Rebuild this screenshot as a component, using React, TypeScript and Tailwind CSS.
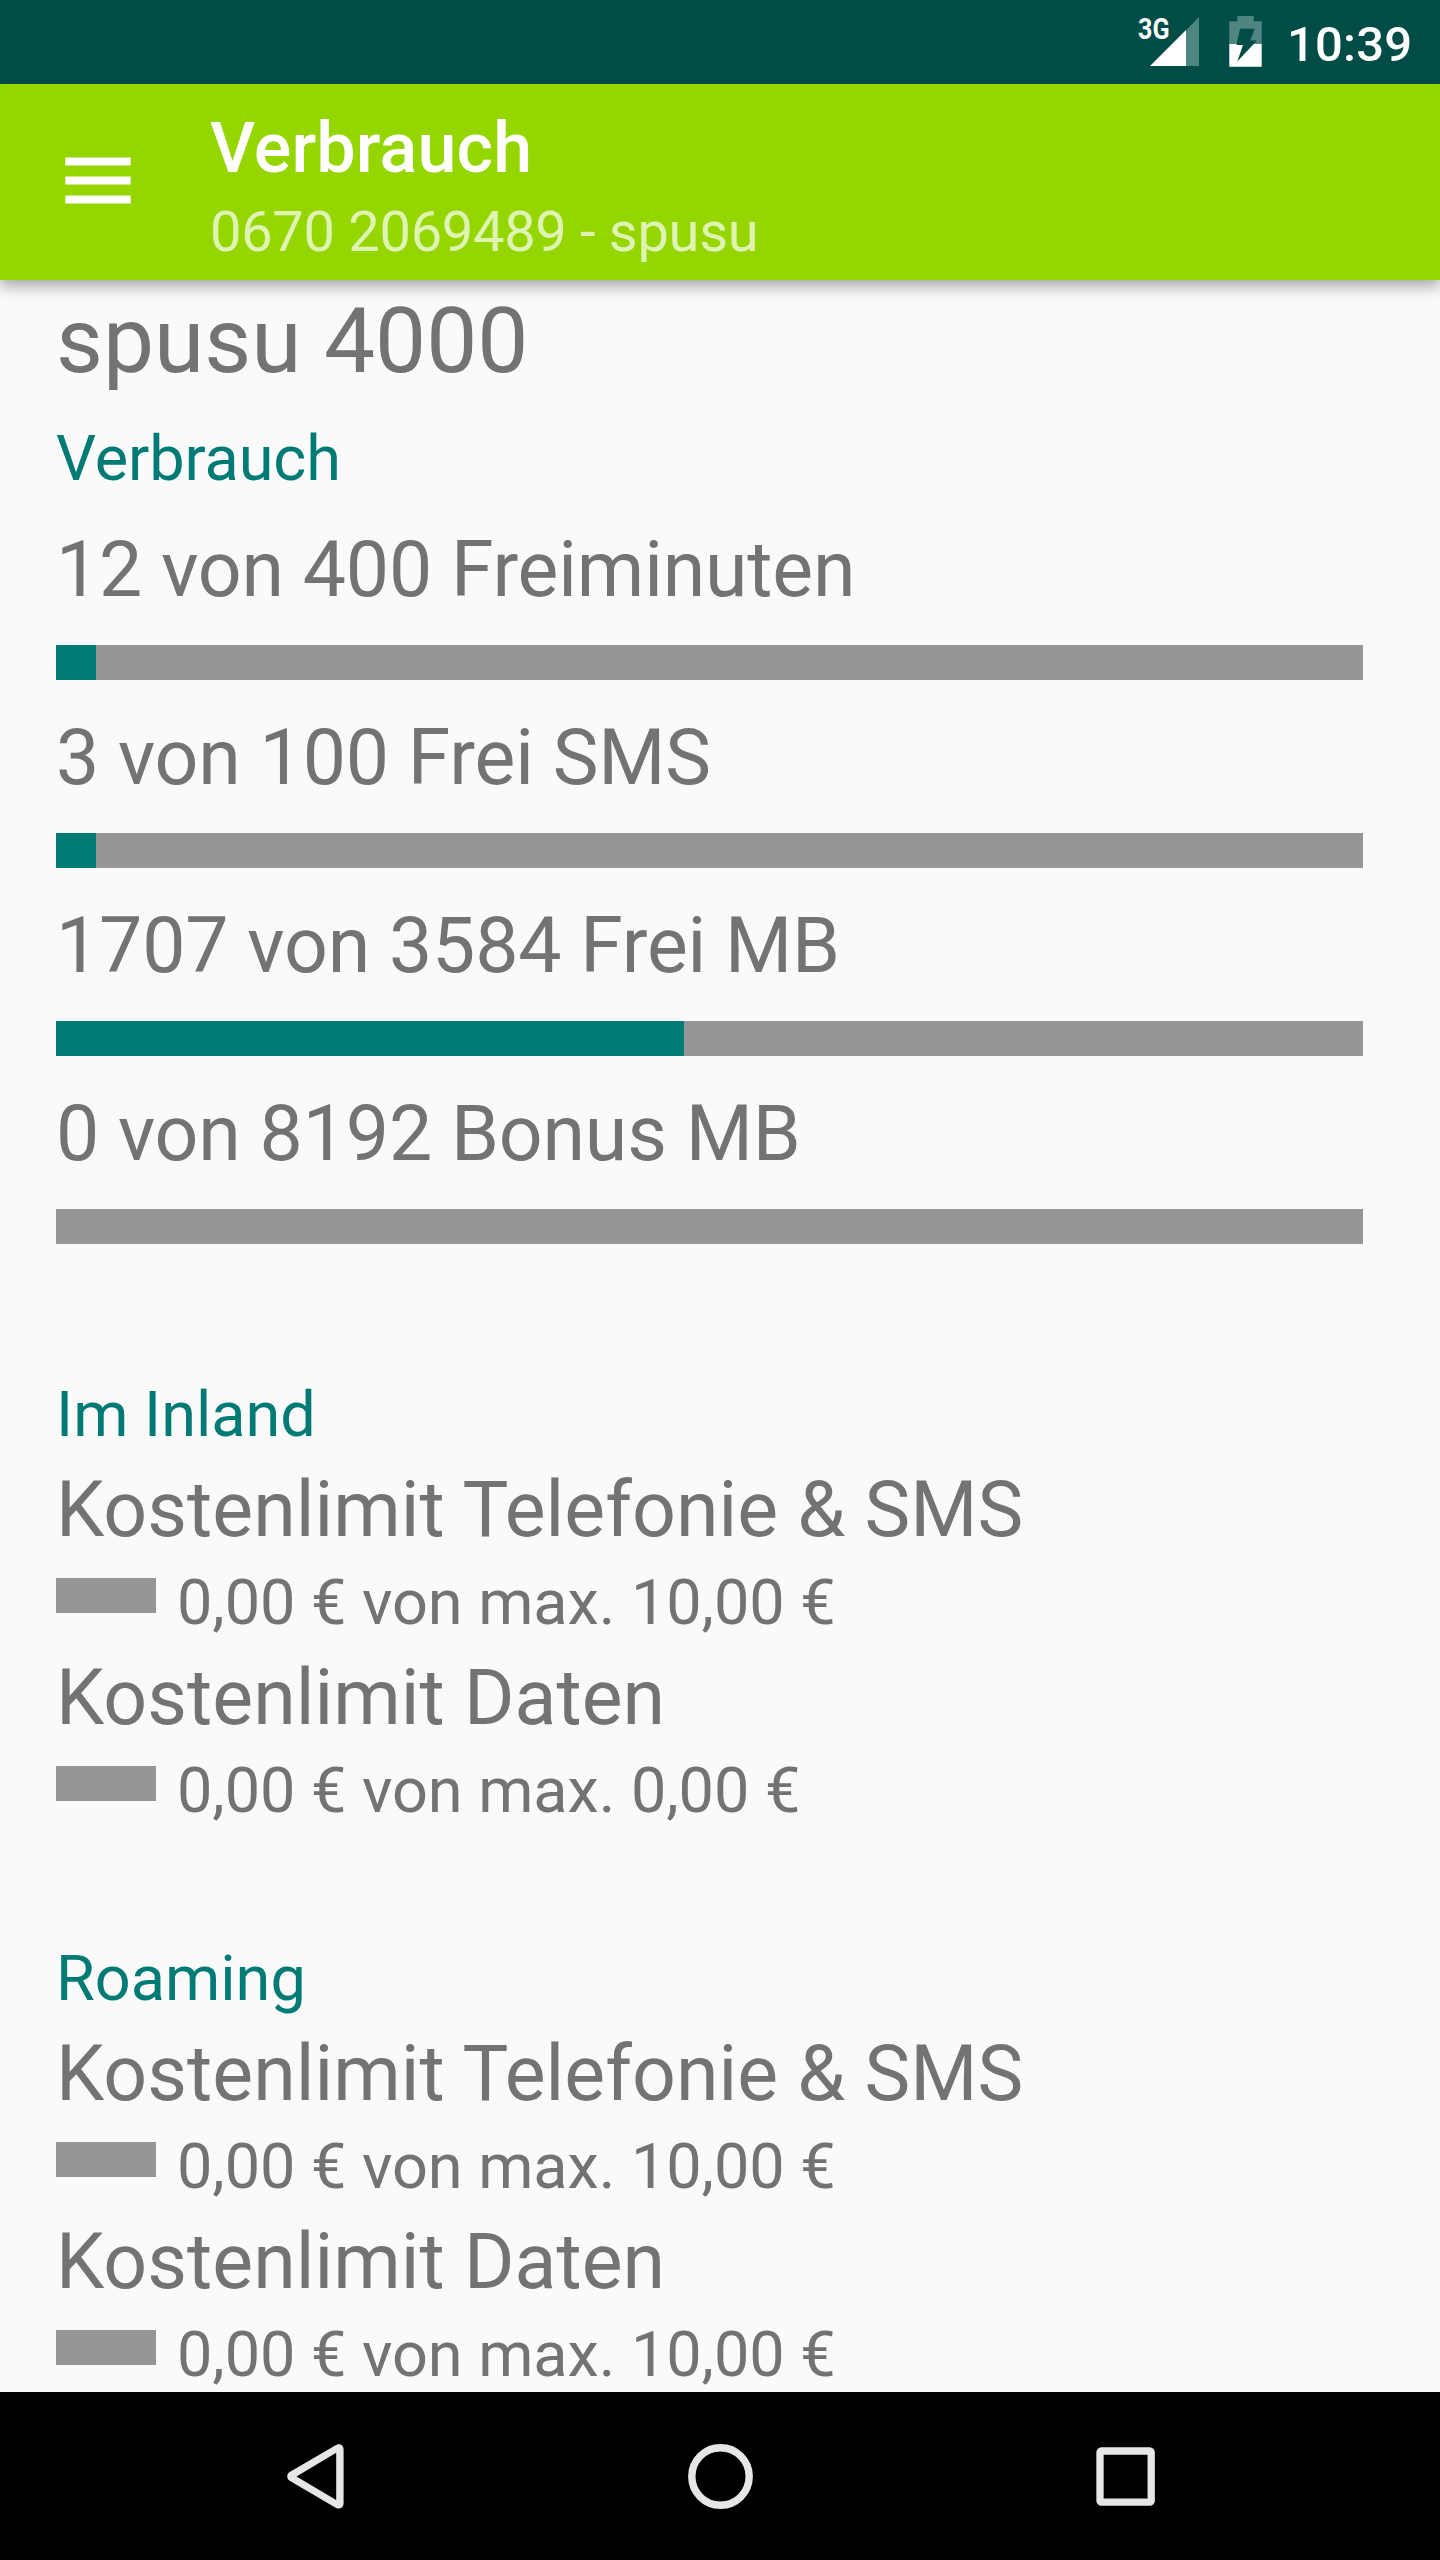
interface UsageProps {
  label: string;
  percent: number;
}

interface CostProps {
  label: string;
  value: string;
}

const BAR_WIDTH = 1307;

const usage: UsageProps[] = [
  { label: "12 von 400 Freiminuten", percent: 3 },
  { label: "3 von 100 Frei SMS", percent: 3 },
  { label: "1707 von 3584 Frei MB", percent: 48 },
  { label: "0 von 8192 Bonus MB", percent: 0 },
];

const inland: CostProps[] = [
  { label: "Kostenlimit Telefonie & SMS", value: "0,00 € von max. 10,00 €" },
  { label: "Kostenlimit Daten", value: "0,00 € von max. 0,00 €" },
];

const roaming: CostProps[] = [
  { label: "Kostenlimit Telefonie & SMS", value: "0,00 € von max. 10,00 €" },
  { label: "Kostenlimit Daten", value: "0,00 € von max. 10,00 €" },
];

function StatusBar() {
  return (
    <div className="flex h-[84px] shrink-0 justify-end bg-[#004d47] pr-[29px]">
      <svg className="mr-[30px] h-[84px] w-[62px]" viewBox="0 0 62 84">
        <text x="1" y="39" fontSize="29" fontWeight="700" fill="#fff" textLength="31.5" lengthAdjust="spacingAndGlyphs">3G</text>
        <path d="M49 30.5 62 17v49H49z" fill="#4f8580" />
        <path d="M13 66 49 30v36z" fill="#fff" />
      </svg>
      <svg className="mr-[25px] h-[84px] w-[33px]" viewBox="0 0 33 84">
        <path d="M.3 21.3H8.3V16H24.7v5.3H32.7V44H.3z" fill="#4f8580" />
        <path d="M.3 44H32.7v22.7H.3z" fill="#fff" />
        <path d="M11 28.8H25.7L21.3 40.5H28L8.3 61.5 14 45H7.5z" fill="#004d47" />
      </svg>
      <span className="w-[124px] pt-[16px] text-right text-[49px] leading-[57px] font-medium tracking-[0.2px] text-white">10:39</span>
    </div>
  );
}

function AppBar() {
  return (
    <header className="z-10 flex h-[196px] shrink-0 bg-[#95d600] shadow-[0_6px_14px_rgba(0,0,0,0.35)]">
      <svg className="mt-[73px] ml-[65px] h-[47px] w-[66px]" viewBox="0 0 66 47" fill="#fff">
        <rect x=".3" y=".5" width="65.4" height="8" />
        <rect x=".3" y="19.5" width="65.4" height="8" />
        <rect x=".3" y="38.5" width="65.4" height="8" />
      </svg>
      <div className="ml-[79px] pt-[23px]">
        <h1 className="text-[70px] leading-[82px] font-medium tracking-[0.15px] text-white">Verbrauch</h1>
        <p className="mt-[10px] text-[56px] leading-[66px] tracking-[-0.3px] text-white/70">0670 2069489 - spusu</p>
      </div>
    </header>
  );
}

function Usage({ label, percent }: UsageProps) {
  return (
    <div>
      <p className="text-[77px] leading-[90px] tracking-[-0.17px]">{label}</p>
      <div className="mt-[30px] h-[35px] w-[1307px] bg-[#969696]">
        <div className="h-full bg-[#007a75]" style={{ width: Math.ceil((BAR_WIDTH * percent) / 100) }} />
      </div>
    </div>
  );
}

function CostLimit({ label, value }: CostProps) {
  return (
    <div>
      <p className="text-[77px] leading-[90px] tracking-[0.04px]">{label}</p>
      <div className="mt-[11px] flex">
        <div className="mt-[12px] h-[35px] w-[100px] bg-[#969696]" />
        <p className="ml-[21px] text-[63px] leading-[73px] tracking-[-0.05px]">{value}</p>
      </div>
    </div>
  );
}

function NavBar() {
  return (
    <nav className="flex h-[168px] shrink-0 items-center justify-center gap-[321px] bg-black">
      <svg className="h-[84px] w-[84px]" viewBox="0 0 84 84">
        <path d="M65.6 15.2V69.6L19.2 42.4z" fill="#e6e6e6" stroke="#e6e6e6" strokeWidth="10" strokeLinejoin="round" />
        <path d="M63.2 18.7V66L23.5 42.4z" fill="#000" />
      </svg>
      <svg className="h-[84px] w-[84px]" viewBox="0 0 84 84" fill="none" stroke="#e6e6e6" strokeWidth="7.4">
        <circle cx="42.5" cy="42.5" r="28.7" />
      </svg>
      <svg className="h-[84px] w-[84px]" viewBox="0 0 84 84" fill="none" stroke="#e6e6e6" strokeWidth="7.3">
        <rect x="17" y="17" width="51.2" height="51.2" rx="1.5" />
      </svg>
    </nav>
  );
}

export default function App() {
  return (
    <div className="flex h-[2560px] w-[1440px] flex-col overflow-hidden bg-[#fafafa] font-['Roboto',sans-serif] whitespace-nowrap">
      <StatusBar />
      <AppBar />

      <main className="flex-1 overflow-hidden px-[56px] pt-2 text-[#737373]">
        <h2 className="text-[91px] leading-[106px]">spusu 4000</h2>

        <h3 className="mt-[28px] text-[63px] leading-[73px] tracking-[-0.1px] text-[#007a75]">Verbrauch</h3>
        <div className="mt-[30px] flex flex-col gap-[33px]">
          {usage.map((item) => (
            <Usage key={item.label} {...item} />
          ))}
        </div>

        <h3 className="mt-[134px] text-[63px] leading-[73px] text-[#007a75]">Im Inland</h3>
        <div className="mt-[14px] flex flex-col gap-[14px]">
          {inland.map((item) => (
            <CostLimit key={item.label} {...item} />
          ))}
        </div>

        <h3 className="mt-[115px] text-[63px] leading-[73px] text-[#007a75]">Roaming</h3>
        <div className="mt-[14px] flex flex-col gap-[14px]">
          {roaming.map((item) => (
            <CostLimit key={item.label} {...item} />
          ))}
        </div>
      </main>

      <NavBar />
    </div>
  );
}
